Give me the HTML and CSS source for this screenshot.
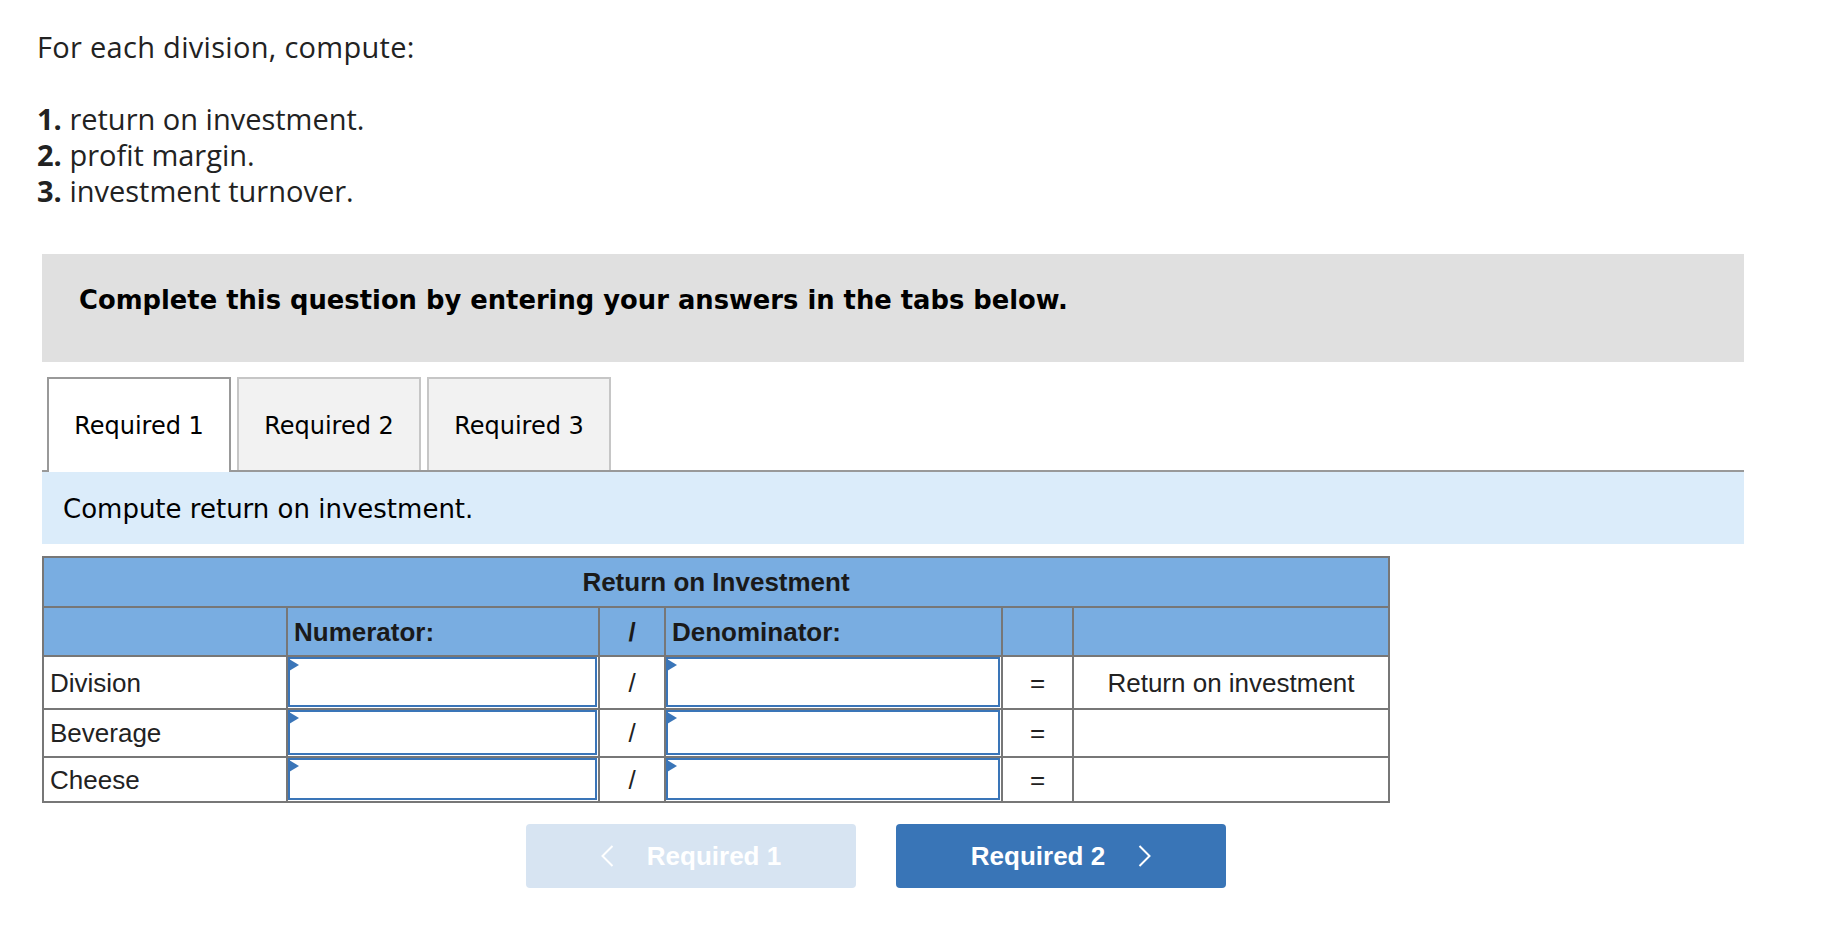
FILE: index.html
```html
<!DOCTYPE html>
<html>
<head>
<meta charset="utf-8">
<title>Return on Investment</title>
<link rel="stylesheet" href="styles.css">
</head>
<body>
<div class="intro">
  <p class="lead">For each division, compute:</p>
  <ol class="steps">
    <li><b>1.</b> return on investment.</li>
    <li><b>2.</b> profit margin.</li>
    <li><b>3.</b> investment turnover.</li>
  </ol>
</div>
<div class="panel">
  <div class="instructions">Complete this question by entering your answers in the tabs below.</div>
  <div class="tabs">
    <div class="tab active">Required 1</div>
    <div class="tab">Required 2</div>
    <div class="tab">Required 3</div>
  </div>
  <div class="band">Compute return on investment.</div>
  <table class="roi">
    <colgroup>
      <col class="c1"><col class="c2"><col class="c3"><col class="c4"><col class="c5"><col class="c6">
    </colgroup>
    <tr class="h1"><th colspan="6" class="title">Return on Investment</th></tr>
    <tr class="h2">
      <th></th>
      <th class="left">Numerator:</th>
      <th class="mid">/</th>
      <th class="left">Denominator:</th>
      <th></th>
      <th></th>
    </tr>
    <tr class="r1">
      <td class="label">Division</td>
      <td class="in"><div class="field"><input type="text"></div></td>
      <td class="mid">/</td>
      <td class="in"><div class="field"><input type="text"></div></td>
      <td class="mid">=</td>
      <td class="mid">Return on investment</td>
    </tr>
    <tr class="r2">
      <td class="label">Beverage</td>
      <td class="in"><div class="field"><input type="text"></div></td>
      <td class="mid">/</td>
      <td class="in"><div class="field"><input type="text"></div></td>
      <td class="mid">=</td>
      <td class="mid"></td>
    </tr>
    <tr class="r3">
      <td class="label">Cheese</td>
      <td class="in"><div class="field"><input type="text"></div></td>
      <td class="mid">/</td>
      <td class="in"><div class="field"><input type="text"></div></td>
      <td class="mid">=</td>
      <td class="mid"></td>
    </tr>
  </table>
  <div class="nav">
    <button class="btn disabled" type="button">
      <svg class="chev" width="13" height="22" viewBox="0 0 13 22"><polyline points="11.5,1 1.5,11 11.5,21" fill="none" stroke="#fff" stroke-width="2"/></svg>
      <span>Required 1</span>
    </button>
    <button class="btn primary" type="button">
      <span>Required 2</span>
      <svg class="chev" width="13" height="22" viewBox="0 0 13 22"><polyline points="1.5,1 11.5,11 1.5,21" fill="none" stroke="#fff" stroke-width="2"/></svg>
    </button>
  </div>
</div>
</body>
</html>
```

FILE: styles.css
```css
html, body {
  margin: 0;
  padding: 0;
  background: #ffffff;
}

.intro {
  padding: 29px 0 0 37px;
  font-family: "Open Sans", Lato, sans-serif;
  font-size: 29px;
  line-height: 36px;
  color: #222222;
}

.lead {
  margin: 0 0 36px 0;
  letter-spacing: 0.3px;
}

.steps {
  list-style: none;
  margin: 0;
  padding: 0;
}

.steps b {
  font-weight: 700;
}

.panel {
  margin: 45px 0 0 42px;
  width: 1702px;
}

.instructions {
  box-sizing: border-box;
  height: 108px;
  padding: 31px 0 0 37px;
  background: #e0e0e0;
  font-family: "DejaVu Sans", Verdana, sans-serif;
  font-weight: bold;
  font-size: 25.8px;
  line-height: 30px;
  color: #000000;
}

.tabs {
  margin-top: 15px;
  height: 93px;
  display: flex;
  align-items: flex-start;
  gap: 6px;
  padding-left: 5px;
  border-bottom: 2px solid #999999;
}

.tab {
  box-sizing: border-box;
  width: 184px;
  height: 93px;
  padding-top: 33px;
  border: 2px solid #c6c6c6;
  border-bottom: 0;
  background: #f2f2f2;
  text-align: center;
  font-family: "DejaVu Sans", Verdana, sans-serif;
  font-size: 24px;
  line-height: 28px;
  color: #000000;
}

.tab.active {
  height: 95px;
  background: #ffffff;
  border-color: #999999;
}

.band {
  box-sizing: border-box;
  height: 72px;
  padding: 22px 0 0 21px;
  background: #dbecfa;
  font-family: "DejaVu Sans", Verdana, sans-serif;
  font-size: 26px;
  line-height: 30px;
  color: #000000;
}

.roi {
  margin-top: 12px;
  width: 1348px;
  table-layout: fixed;
  border-collapse: separate;
  border-spacing: 0;
  border-top: 2px solid #777777;
  border-left: 2px solid #777777;
  font-family: "Liberation Sans", Arial, sans-serif;
  font-size: 26px;
  color: #222222;
}

.c1 { width: 244px; }
.c2 { width: 312px; }
.c3 { width: 66px; }
.c4 { width: 337px; }
.c5 { width: 71px; }
.c6 { width: 316px; }

.roi th,
.roi td {
  box-sizing: border-box;
  border-right: 2px solid #777777;
  border-bottom: 2px solid #777777;
  padding: 0 6px;
  vertical-align: middle;
  line-height: 30px;
}

.roi th {
  background: #79ade1;
  font-weight: bold;
  color: #1a1a1a;
}

.roi .title { text-align: center; }
.roi .left { text-align: left; }
.roi .mid { text-align: center; padding: 0; }
.roi .label { text-align: left; padding-left: 6px; }

.h1 { height: 50px; }
.h2 { height: 49px; }
.r1 { height: 53px; }
.r2 { height: 48px; }
.r3 { height: 45px; }

.roi td.in {
  padding: 0 1px 1px 0;
  vertical-align: top;
}

.field {
  position: relative;
}

.field::before {
  content: "";
  position: absolute;
  left: 1px;
  top: 2px;
  width: 0;
  height: 0;
  border-left: 10px solid #3a75b8;
  border-top: 6.5px solid transparent;
  border-bottom: 6.5px solid transparent;
}

.field input {
  display: block;
  box-sizing: border-box;
  width: 100%;
  margin: 0;
  padding: 0 8px;
  border: 2px solid #3a75b8;
  border-radius: 0;
  background: #ffffff;
  font-family: "Liberation Sans", Arial, sans-serif;
  font-size: 24px;
  outline: none;
}

.r1 .field input { height: 50px; }
.r2 .field input { height: 45px; }
.r3 .field input { height: 42px; }

.nav {
  margin-top: 21px;
  display: flex;
  gap: 40px;
  padding-left: 484px;
}

.btn {
  box-sizing: border-box;
  width: 330px;
  height: 64px;
  border: 0;
  border-radius: 4px;
  display: flex;
  align-items: center;
  justify-content: center;
  gap: 33px;
  padding: 0;
  font-family: "Liberation Sans", Arial, sans-serif;
  font-weight: bold;
  font-size: 26px;
  color: #ffffff;
  cursor: pointer;
}

.btn.disabled {
  background: #d7e4f2;
}

.btn.primary {
  background: #3975b7;
}

.chev {
  display: block;
}
```
